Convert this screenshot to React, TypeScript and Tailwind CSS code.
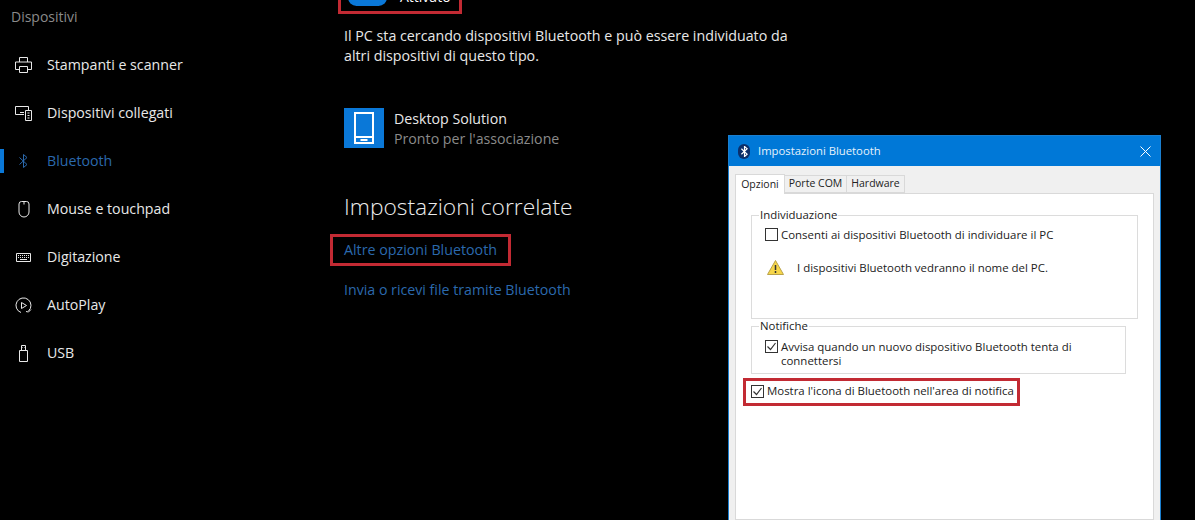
import { ReactNode } from "react";

const sideItems = [
  { label: "Stampanti e scanner", icon: <PrinterIcon /> },
  { label: "Dispositivi collegati", icon: <DevicesIcon /> },
  { label: "Bluetooth", icon: <BluetoothIcon />, active: true },
  { label: "Mouse e touchpad", icon: <MouseIcon /> },
  { label: "Digitazione", icon: <KeyboardIcon /> },
  { label: "AutoPlay", icon: <AutoPlayIcon /> },
  { label: "USB", icon: <UsbIcon /> },
];

function PrinterIcon() {
  return (
    <svg width="17" height="16" viewBox="0 0 17 16" fill="none" stroke="currentColor" strokeWidth="1">
      <path d="M4.500 5V.5h8V5M4.500 12.500H.5V5h16v7.500h-4M4.500 9.500h8v6h-8z" />
    </svg>
  );
}

function DevicesIcon() {
  return (
    <svg width="17" height="15" viewBox="0 0 17 15" fill="none" stroke="currentColor" strokeWidth="1">
      <path d="M9 8.500H.5v-8h13V4M5 6.500h4" />
      <path d="M10.500 4.500h6v10h-6zM12.500 7h2M12.500 9.500h2M12.500 12h2" />
    </svg>
  );
}

function BluetoothIcon() {
  return (
    <svg width="9" height="14" viewBox="0 0 9 14" fill="none" stroke="currentColor" strokeWidth="1">
      <path d="M.5 3.500l7.500 7L4.500 13.500V.5L8 3.500l-7.500 7" />
    </svg>
  );
}

function MouseIcon() {
  return (
    <svg width="12" height="17" viewBox="0 0 12 17" fill="none" stroke="currentColor" strokeWidth="1">
      <path d="M3.500.5h5A2.500 2.500 0 0 1 11 3v8a5 5 0 0 1-10 0V3A2.500 2.500 0 0 1 3.500.5zM6 .5v3" />
    </svg>
  );
}

function KeyboardIcon() {
  return (
    <svg width="15" height="9" viewBox="0 0 15 9" fill="none" stroke="currentColor" strokeWidth="1">
      <path d="M.5.5h14v8H.5z" />
      <path d="M2 2.500h11M2 4.500h11" strokeDasharray="1 1" />
      <path d="M4 6.500h7" />
    </svg>
  );
}

function AutoPlayIcon() {
  return (
    <svg width="17" height="17" viewBox="0 0 17 17" fill="none" stroke="currentColor" strokeWidth="1">
      <path d="M6 15.500A7.500 7.500 0 1 1 13.500 14M16 12.500l-2.500 2.500-2.500-.500" />
      <path d="M6.500 5.500l5 3-5 3z" />
    </svg>
  );
}

function UsbIcon() {
  return (
    <svg width="10" height="17" viewBox="0 0 10 17" fill="none" stroke="currentColor" strokeWidth="1">
      <path d="M.5 5.500h8v11h-8zM2.500 5.500v-5h4v5M3.500 2.500h.5M5 2.500h.5" />
    </svg>
  );
}

function CheckBox({ checked }: { checked?: boolean }) {
  return (
    <svg className="shrink-0" width="13" height="13" viewBox="0 0 13 13" fill="none">
      <rect x=".5" y=".5" width="12" height="12" fill="#fff" stroke="#333" />
      {checked && <path d="M2.500 6.500l3 3 5-6.500" stroke="#333" strokeWidth="1.200" />}
    </svg>
  );
}

function Group({ title, className, children }: { title: string; className: string; children: ReactNode }) {
  return (
    <fieldset className={`border border-[#dcdcdc] px-[13px] ${className}`}>
      <legend className="-ml-[6px] px-[1px] text-[11.400px] leading-[14px]">{title}</legend>
      {children}
    </fieldset>
  );
}

function BluetoothDialog() {
  return (
    <div className="absolute left-[728px] top-[135px] flex h-[385px] w-[433px] flex-col border border-b-0 border-[#1a7fd0] bg-[#f0f0f0] text-[#222] font-['Open_Sans',sans-serif]">
      <div className="flex h-[30px] shrink-0 items-center bg-[#0078d7] pl-[9px] pr-[9px] text-white">
        <span className="flex h-[15px] w-[12px] items-center justify-center rounded-full bg-[#0b2f6b]">
          <svg width="7" height="11" viewBox="0 0 9 14" fill="none" stroke="#fff" strokeWidth="1.500">
            <path d="M.5 3.500l7.500 7L4.500 13.500V.5L8 3.500l-7.500 7" />
          </svg>
        </span>
        <span className="ml-[8px] text-[11.300px] text-[#e6f2fb]">Impostazioni Bluetooth</span>
        <svg className="ml-auto" width="11" height="11" viewBox="0 0 11 11" stroke="#fff" strokeWidth="1">
          <path d="M.5.5l10 10M10.500.5l-10 10" />
        </svg>
      </div>
      <div className="flex flex-1 flex-col px-[6px] pt-[8px]">
        <div className="flex h-[19px] items-end text-[10.500px]">
          <div className="relative z-10 -mb-px flex h-[20px] w-[50px] items-center justify-center border border-b-0 border-[#d9d9d9] bg-white">Opzioni</div>
          <div className="flex h-[18px] w-[62px] items-center justify-center border-y border-r border-[#d9d9d9] bg-[#f0f0f0]">Porte COM</div>
          <div className="flex h-[18px] w-[58px] items-center justify-center border-y border-r border-[#d9d9d9] bg-[#f0f0f0]">Hardware</div>
        </div>
        <div className="flex flex-1 flex-col border border-[#d9d9d9] bg-white pl-[15px] pr-[15px] pt-[14px] text-[11.450px]">
          <Group title="Individuazione" className="h-[111px]">
            <div className="mt-[4px] flex items-center gap-[3px]">
              <CheckBox />
              <span>Consenti ai dispositivi Bluetooth di individuare il PC</span>
            </div>
            <div className="mt-[16px] flex items-center gap-[13px] pl-[2px]">
              <svg width="17" height="15" viewBox="0 0 17 15">
                <path d="M8.500.5L16.500 14.500H.5z" fill="#f6d64a" stroke="#b9a24a" />
                <path d="M8.500 5v5M8.500 11v2" stroke="#333" strokeWidth="1.500" />
              </svg>
              <span>I dispositivi Bluetooth vedranno il nome del PC.</span>
            </div>
          </Group>
          <Group title="Notifiche" className="mr-[12px] h-[55px]">
            <div className="mt-[7px] flex items-start gap-[3px] leading-[14px]">
              <CheckBox checked />
              <span className="w-[320px]">Avvisa quando un nuovo dispositivo Bluetooth tenta di connettersi</span>
            </div>
          </Group>
          <div className="-ml-[8px] mt-[4px] flex h-[28px] w-[277px] items-center gap-[3px] border-[3px] border-[#c22a33] pb-[2px] pl-[5px]">
            <CheckBox checked />
            <span className="whitespace-nowrap">Mostra l'icona di Bluetooth nell'area di notifica</span>
          </div>
        </div>
      </div>
    </div>
  );
}

export default function App() {
  return (
    <div className="relative flex h-[520px] w-[1195px] overflow-hidden bg-black text-white font-['Open_Sans',sans-serif]">
      <aside className="w-[338px] shrink-0">
        <div className="pl-[11px] pt-[7px] text-[14px] leading-[19px] text-[#8a8a8a]">Dispositivi</div>
        <nav className="mt-[15px]">
          {sideItems.map((item) => (
            <div key={item.label} className={`relative flex h-[48px] items-center ${item.active ? "text-[#2b69ad]" : "text-[#e8e8e8]"}`}>
              {item.active && <span className="absolute left-0 top-[12px] h-[24px] w-[4px] bg-[#0a78d8]" />}
              <span className="flex w-[47px] justify-center pl-[2px] pr-[2px]">{item.icon}</span>
              <span className="text-[14.200px]">{item.label}</span>
            </div>
          ))}
        </nav>
      </aside>
      <main className="flex-1">
        <div className="-mt-[8px] flex h-[22px] w-[124px] items-center border-[3px] border-[#c22a33] pl-[7px]">
          <span className="h-[17px] w-[39px] -translate-y-[6px] rounded-full bg-[#0a78d8]" />
          <span className="ml-[13px] -translate-y-[7px] text-[14px]">Attivato</span>
        </div>
        <p className="ml-[6px] mt-[12px] w-[460px] text-[14.260px] leading-[20px] text-[#e8e8e8]">
          Il PC sta cercando dispositivi Bluetooth e può essere individuato da altri dispositivi di questo tipo.
        </p>
        <div className="ml-[6px] mt-[42px] flex h-[40px] items-center gap-[10px]">
          <div className="flex h-[40px] w-[40px] items-center justify-center bg-[#0a78d8]">
            <svg width="20" height="32" viewBox="0 0 20 32" fill="none" stroke="#fff" strokeWidth="2">
              <path d="M1 1h18v30H1zM1 25h18" />
              <path d="M6.500 28h7" />
            </svg>
          </div>
          <div className="pt-[2px] text-[14.200px] leading-[20px]">
            <div className="text-[#e8e8e8]">Desktop Solution</div>
            <div className="text-[#8a8a8a]">Pronto per l'associazione</div>
          </div>
        </div>
        <h2 className="ml-[6px] mt-[44px] text-[22.800px] font-light leading-[30px] text-[#ececec]">Impostazioni correlate</h2>
        <div className="-ml-[8px] mt-[12px] flex h-[32px] w-[181px] items-center border-[3px] border-[#c22a33] pl-[11px] text-[14.260px] text-[#2b69ad]">
          Altre opzioni Bluetooth
        </div>
        <div className="ml-[6px] mt-[14px] text-[14.200px] leading-[20px] text-[#2b69ad]">Invia o ricevi file tramite Bluetooth</div>
      </main>
      <BluetoothDialog />
    </div>
  );
}
